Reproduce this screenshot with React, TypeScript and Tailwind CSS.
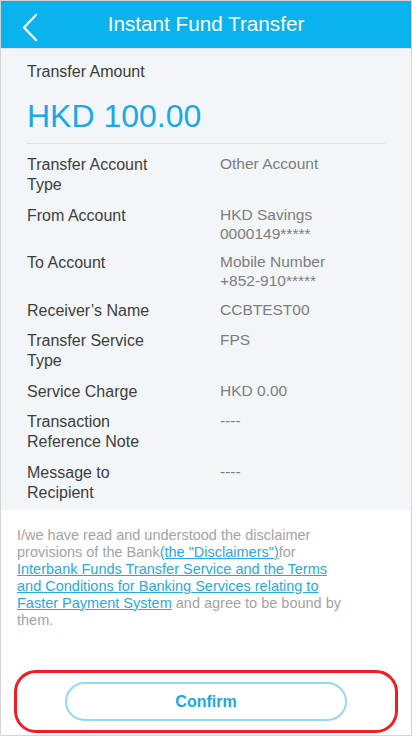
import React from "react";

const rows: { label: string[]; value: string[] }[] = [
  { label: ["Transfer Account", "Type"], value: ["Other Account"] },
  { label: ["From Account"], value: ["HKD Savings", "0000149*****"] },
  { label: ["To Account"], value: ["Mobile Number", "+852-910*****"] },
  { label: ["Receiver\u2019s Name"], value: ["CCBTEST00"] },
  { label: ["Transfer Service", "Type"], value: ["FPS"] },
  { label: ["Service Charge"], value: ["HKD 0.00"] },
  { label: ["Transaction", "Reference Note"], value: ["----"] },
  { label: ["Message to", "Recipient"], value: ["----"] },
];

export default function App() {
  return (
    <div
      className="w-[412px] h-[736px] border border-[#d4d4d4] bg-white flex flex-col overflow-hidden"
      style={{ fontFamily: '"Liberation Sans", Arial, sans-serif' }}
    >
      <div className="relative h-[47px] shrink-0 bg-[#0bb3ee] flex items-center justify-center shadow-[0_1px_1px_rgba(0,0,0,0.08)]">
        <svg
          className="absolute left-[19px] top-[12px]"
          width="20"
          height="30"
          viewBox="0 0 20 30"
          fill="none"
        >
          <path d="M16 2 L4 14.5 L16 27" stroke="white" strokeWidth="2.4" strokeLinecap="round" strokeLinejoin="round" />
        </svg>
        <span className="text-white text-[20.7px] leading-none">Instant Fund Transfer</span>
      </div>

      <div className="bg-[#f3f6f9] px-[26px] pt-[14px] pb-[7px]">
        <div className="text-[16px] leading-[20px] text-[#3a3a3a]">Transfer Amount</div>
        <div className="mt-[15px] text-[32px] leading-[38px] text-[#1ba8e6]">HKD 100.00</div>
        <div className="mt-[8px] h-px bg-[#dde1e5]" />
        <div className="mt-[11px] flex flex-col gap-[10.5px]">
          {rows.map((r, i) => (
            <div key={i} className="grid grid-cols-[193px_1fr]">
              <div className="text-[16px] leading-[20px] text-[#3d3d3d]">
                {r.label.map((l, j) => (
                  <div key={j}>{l}</div>
                ))}
              </div>
              <div className="text-[15.5px] leading-[19px] text-[#7d7d7d] -mt-[1px]">
                {r.value.map((v, j) => (
                  <div key={j}>{v}</div>
                ))}
              </div>
            </div>
          ))}
        </div>
      </div>

      <div className="px-[16px] pt-[17px] text-[14.5px] leading-[17px] text-[#a3a3a3]">
        I/we have read and understood the disclaimer
        <br />
        provisions of the Bank
        <span className="text-[#29a9e1] underline">(the "Disclaimers")</span>for
        <br />
        <span className="text-[#29a9e1] underline">
          Interbank Funds Transfer Service and the Terms
          <br />
          and Conditions for Banking Services relating to
          <br />
          Faster Payment System
        </span>{" "}
        and agree to be bound by
        <br />
        them.
      </div>

      <div className="mt-auto mb-[2px] mx-[13px] h-[63px] border-[3px] border-[#f21c24] rounded-[22px] flex items-center justify-center">
        <div className="w-[282px] h-[39px] rounded-full border-2 border-[#95d8f5] flex items-center justify-center text-[16px] text-[#1ba8e6] font-bold">
          Confirm
        </div>
      </div>
    </div>
  );
}
